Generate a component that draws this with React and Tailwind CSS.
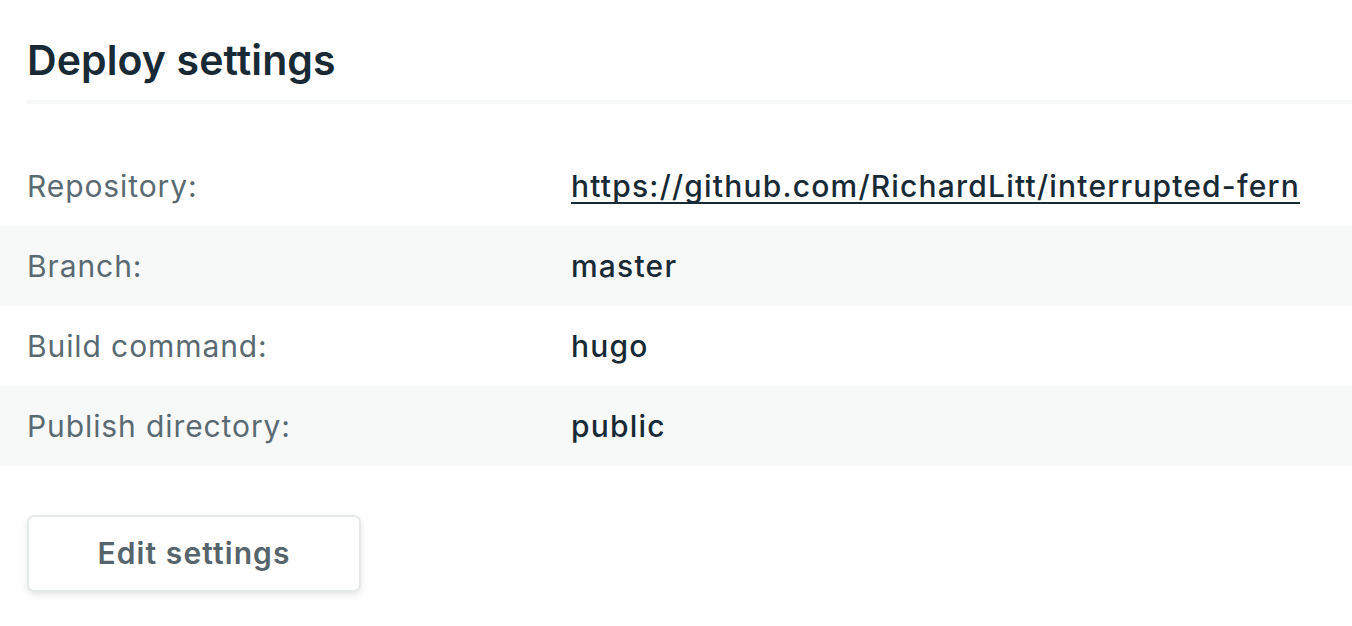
export default function App() {
  const rows = [
    { label: 'Repository:', value: 'https://github.com/RichardLitt/interrupted-fern', link: true },
    { label: 'Branch:', value: 'master' },
    { label: 'Build command:', value: 'hugo' },
    { label: 'Publish directory:', value: 'public' },
  ];

  return (
    <div className="min-h-screen bg-white font-['Inter',sans-serif] antialiased">
      <div className="pl-[27px] pt-[30px]">
        <h1 className="text-[41px] leading-[60px] font-semibold tracking-[0.1px] text-[#172a35]">Deploy settings</h1>
        <div className="mt-[10px] h-[4px] bg-[#f6f7f7]"></div>
      </div>

      <div className="mt-[42px]">
        {rows.map((row, i) => (
          <div
            key={row.label}
            className={`flex items-center h-[80px] pl-[27px] ${i % 2 === 1 ? 'bg-[#f7f9f9]' : 'bg-white'}`}
          >
            <div className="w-[544px] text-[30px] tracking-[0.9px] text-[#5a6a72]">{row.label}</div>
            {row.link ? (
              <a href="#" className="text-[30px] tracking-[1.2px] font-medium text-[#172a35] underline decoration-2 underline-offset-[5px] [text-decoration-skip-ink:none]">
                {row.value}
              </a>
            ) : (
              <div className="text-[30px] tracking-[1.2px] font-medium text-[#172a35]">{row.value}</div>
            )}
          </div>
        ))}
      </div>

      <div className="pl-[27px] mt-[49px]">
        <button className="w-[334px] h-[77px] rounded-[7px] border-2 border-[#e6e9ea] bg-white shadow-[0_3px_7px_rgba(0,0,0,0.1)] text-[30px] tracking-[1.1px] font-semibold text-[#56646c]">
          Edit settings
        </button>
      </div>
    </div>
  );
}
